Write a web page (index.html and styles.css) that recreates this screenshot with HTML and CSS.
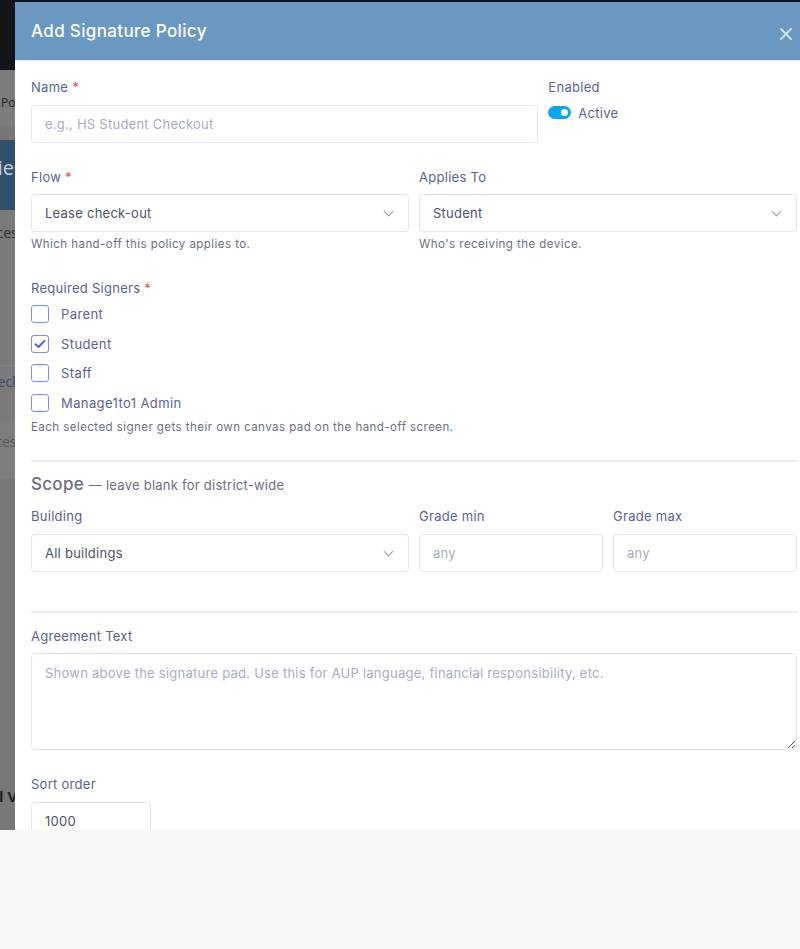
FILE: index.html
```html
<!DOCTYPE html>
<html lang="en">
<head>
<meta charset="utf-8">
<title>Add Signature Policy</title>
<link rel="stylesheet" href="styles.css">
</head>
<body>
<div class="screen">
  <div class="page">
    <div class="band band-top"></div>
    <div class="band band-nav"><span>Policies</span></div>
    <div class="band band-sub"></div>
    <div class="band band-title"><span>Policies</span></div>
    <div class="band band-list"><span>Devices</span></div>
    <div class="band band-link"><span>Checko</span></div>
    <div class="band band-note"><span>Notes</span></div>
    <div class="band band-rest"><span>All V</span></div>
  </div>

  <div class="modal">
    <div class="modal-header">
      <h5 class="modal-title">Add Signature Policy</h5>
      <button class="close" type="button">
        <svg width="12" height="12" viewBox="0 0 12 12"><path d="M1 1L11 11M11 1L1 11" stroke="#d6e1ee" stroke-width="1.8" stroke-linecap="round"/></svg>
      </button>
    </div>
    <div class="modal-body">
      <div class="row">
        <div class="col-8 group">
          <label class="form-label">Name <span class="req">*</span></label>
          <input class="form-control" type="text" placeholder="e.g., HS Student Checkout">
        </div>
        <div class="col-4 group">
          <label class="form-label">Enabled</label>
          <div class="switch">
            <span class="switch-track"><span class="switch-knob"></span></span>
            <span class="switch-label">Active</span>
          </div>
        </div>
      </div>

      <div class="row">
        <div class="col-6 group wide">
          <label class="form-label">Flow <span class="req">*</span></label>
          <div class="form-select">Lease check-out<span class="chev"></span></div>
          <div class="form-text">Which hand-off this policy applies to.</div>
        </div>
        <div class="col-6 group wide">
          <label class="form-label">Applies To</label>
          <div class="form-select">Student<span class="chev"></span></div>
          <div class="form-text">Who's receiving the device.</div>
        </div>
      </div>

      <div class="group checks">
        <label class="form-label">Required Signers <span class="req">*</span></label>
        <div class="check"><span class="box"></span>Parent</div>
        <div class="check"><span class="box checked"><svg width="12" height="10" viewBox="0 0 12 10"><path d="M1.5 5.2L4.5 8L10.5 1.8" fill="none" stroke="#4c5fe6" stroke-width="1.9" stroke-linecap="round" stroke-linejoin="round"/></svg></span>Student</div>
        <div class="check"><span class="box"></span>Staff</div>
        <div class="check"><span class="box"></span>Manage1to1 Admin</div>
        <div class="form-text flush">Each selected signer gets their own canvas pad on the hand-off screen.</div>
      </div>

      <hr class="divider first">

      <h6 class="scope">Scope <small>— leave blank for district-wide</small></h6>

      <div class="row">
        <div class="col-6 group">
          <label class="form-label">Building</label>
          <div class="form-select">All buildings<span class="chev"></span></div>
        </div>
        <div class="col-3 group">
          <label class="form-label">Grade min</label>
          <input class="form-control" type="text" placeholder="any">
        </div>
        <div class="col-3 group">
          <label class="form-label">Grade max</label>
          <input class="form-control" type="text" placeholder="any">
        </div>
      </div>

      <hr class="divider second">

      <div class="group">
        <label class="form-label">Agreement Text</label>
        <textarea class="form-control area" placeholder="Shown above the signature pad. Use this for AUP language, financial responsibility, etc."></textarea>
      </div>

      <div class="group">
        <label class="form-label">Sort order</label>
        <input class="form-control short" type="text" value="1000">
      </div>
    </div>
  </div>
</div>
</body>
</html>
```

FILE: styles.css
```css
html, body {
	margin: 0;
	overflow: hidden;
}
body {
	background: #f8f8fa;
	font-family: Inter, "Open Sans", sans-serif;
}
.screen {
	position: relative;
	height: 830px;
	overflow: hidden;
}

/* dimmed page behind the dialog */
.page {
	background: #7a7a7a;
	height: 830px;
}
.band {
	position: relative;
	overflow: hidden;
	white-space: nowrap;
	font-family: "Open Sans", sans-serif;
}
.band span {
	display: block;
}
.band-top {
	height: 70px;
	background: #121418;
}
.band-nav {
	height: 55px;
	background: #7c7c7c;
	font-size: 12px;
	color: #262626;
}
.band-nav span {
	padding: 24px 0 0 1px;
}
.band-sub {
	height: 15px;
	background: #777777;
}
.band-title {
	height: 70px;
	background: #33506b;
	font-size: 20px;
	color: #c3cfdb;
}
.band-title span {
	padding: 14px 0 0 0;
	margin-left: -46px;
}
.band-list {
	height: 155px;
	background: #7a7a7a;
	font-size: 14px;
	color: #2f2f2f;
}
.band-list span {
	padding: 13px 0 0 0;
	margin-left: -32px;
}
.band-link {
	height: 55px;
	background: #7a7a7a;
	border-top: 1px solid #858585;
	font-size: 14px;
	color: #3b4677;
}
.band-link span {
	padding: 6px 0 0 0;
	margin-left: -20px;
}
.band-note {
	height: 58px;
	background: #7d7d7d;
	font-size: 14px;
	color: #5a5a5a;
}
.band-note span {
	padding: 11px 0 0 0;
	margin-left: -22px;
}
.band-rest {
	height: 352px;
	background: #787878;
	font-size: 15px;
	font-weight: 700;
	color: #1f1f24;
}
.band-rest span {
	padding: 307px 0 0 0;
	margin-left: -16px;
}

/* dialog */
.modal {
	position: absolute;
	left: 15px;
	top: 2px;
	width: 798px;
	height: 900px;
	background: #ffffff;
	letter-spacing: 0.28px;
}
.modal-header {
	height: 59px;
	background: #6a98c1;
	border-bottom: 1px solid #dfe6ee;
	display: flex;
	align-items: center;
	justify-content: space-between;
	padding: 0 16px;
	box-sizing: border-box;
}
.modal-title {
	margin: 0;
	font-size: 17px;
	font-weight: 500;
	letter-spacing: 0.35px;
	color: #ffffff;
}
.close {
	border: 0;
	background: none;
	padding: 0;
	margin: 6px 5px 0 0;
	display: flex;
}
.modal-body {
	padding: 16px 16px 0 16px;
}

.row {
	display: grid;
	grid-template-columns: repeat(12, 1fr);
	column-gap: 10px;
}
.col-8 { grid-column: span 8; }
.col-6 { grid-column: span 6; }
.col-4 { grid-column: span 4; }
.col-3 { grid-column: span 3; }

.group {
	margin-bottom: 24px;
}
.group.wide {
	margin-bottom: 25px;
}
.form-label {
	display: block;
	font-size: 13px;
	line-height: 21px;
	color: #5c6396;
	margin-bottom: 6.5px;
}
.req {
	color: #e0515a;
}
.form-control, .form-select {
	display: block;
	box-sizing: border-box;
	width: 100%;
	height: 38px;
	border: 1px solid #e4e4ee;
	border-radius: 4px;
	padding: 0 13px;
	font-family: Inter, "Open Sans", sans-serif;
	font-size: 13px;
	letter-spacing: 0.25px;
	color: #4e5368;
	background: #ffffff;
	outline: none;
}
.form-control::placeholder {
	color: #a9acc2;
}
.form-select {
	position: relative;
	line-height: 36px;
}
.chev {
	position: absolute;
	right: 16px;
	top: 13px;
	width: 6px;
	height: 6px;
	border-right: 1px solid #9a9db2;
	border-bottom: 1px solid #9a9db2;
	transform: rotate(45deg);
}
.form-text {
	font-size: 11.5px;
	line-height: 17px;
	letter-spacing: 0.45px;
	color: #6c6f82;
	margin-top: 4px;
}
.form-text.flush {
	margin-top: 1px;
}

.switch {
	display: flex;
	align-items: center;
	margin-top: 1px;
}
.switch-track {
	width: 23px;
	height: 13px;
	border-radius: 7px;
	background: #0ea5eb;
	position: relative;
	margin-right: 7px;
}
.switch-knob {
	position: absolute;
	right: 3px;
	top: 3px;
	width: 7px;
	height: 7px;
	border-radius: 50%;
	background: #ffffff;
}
.switch-label {
	font-size: 13px;
	color: #5c6396;
}

.checks .form-label {
	margin-bottom: 0;
}
.check {
	display: flex;
	align-items: center;
	height: 29.7px;
	font-size: 13px;
	letter-spacing: 0.4px;
	color: #5c6396;
}
.box {
	width: 18px;
	height: 18px;
	box-sizing: border-box;
	border: 1.5px solid #7d8cf2;
	border-radius: 3px;
	margin-right: 12px;
	display: flex;
	align-items: center;
	justify-content: center;
}

.divider {
	border: 0;
	border-top: 2px solid #ececf1;
	margin: 0;
}
.divider.first {
	margin: 3px 0 10px 0;
}
.divider.second {
	margin: 15px 0 13px 0;
}
.scope {
	margin: 0 0 8.5px 0;
	font-size: 17px;
	line-height: 25px;
	font-weight: 500;
	color: #6b6e80;
}
.scope small {
	font-size: 13px;
	font-weight: 400;
	letter-spacing: 0.25px;
}
.area {
	height: 97px;
	padding: 10px 13px;
	resize: vertical;
	line-height: 19px;
}
.short {
	width: 120px;
}
```
